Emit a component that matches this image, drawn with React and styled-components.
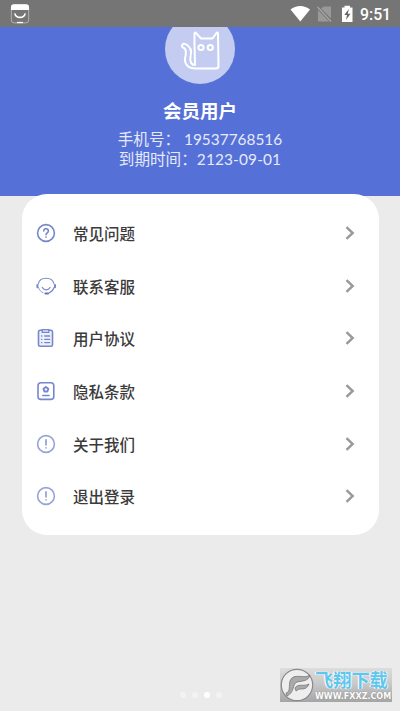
import React from 'react';
import styled, { createGlobalStyle } from 'styled-components';

const menuItems = [
    { label: '常见问题', icon: 'question' },
    { label: '联系客服', icon: 'service' },
    { label: '用户协议', icon: 'agreement' },
    { label: '隐私条款', icon: 'privacy' },
    { label: '关于我们', icon: 'about' },
    { label: '退出登录', icon: 'about' }
]

const StatusIcons = () => (
    <svg width='66' height='28' viewBox='0 0 66 28'>
        <path d='M0.5 9.5C6 4.7 14.5 4.7 20 9.5L10.3 21.5Z' fill='#fff' />
        <path d='M31 8.5L34 6.5H41V18.5ZM28 10L39 21.5H28Z' fill='#999' />
        <path d='M27.5 7L41 21.5' stroke='#a5a5a5' strokeWidth='1.3' />
        <path d='M52 7.5H54.5V5.8H60V7.5H62.5V22H52Z' fill='#fff' />
        <path d='M58.8 9L54.3 15H57L56 20L60.5 13.7H57.8Z' fill='#666' />
    </svg>
)

const AppIcon = () => (
    <svg width='20' height='20' viewBox='0 0 20 20'>
        <rect x='1.3' y='0.7' width='17.4' height='18.2' rx='3' fill='none' stroke='#ccc' strokeWidth='0.7' />
        <path d='M1 6V3Q1 0.3 4 0.3H16Q19 0.3 19 3V6Z' fill='#fff' />
        <path d='M4.8 9.3C6 14.7 14 14.7 15.2 9.3' fill='none' stroke='#fff' strokeWidth='1.6' />
        <path d='M7 18.5H13' stroke='#fff' strokeWidth='1.3' />
    </svg>
)

const CatIcon = () => (
    <svg width='70' height='70' viewBox='0 0 70 70' fill='none' stroke='#fff' strokeWidth='2' strokeLinejoin='round' strokeLinecap='round'>
        <path d='M29.5 31V19.5Q30 17.5 31.5 19.5L36 24.5H47.5L51.5 19Q53 17.5 53 20L53.5 52Q53.5 54.5 51 54.5H31C22 54.5 18.5 49 20.5 42C21.5 37 21 34.5 18 33.5C15.8 32 17.5 28.8 20.5 30.2C27 33 26.5 39 25.5 43C24.5 48 26.5 51 30 51L29.5 31' />
        <circle cx='36' cy='33.5' r='2.6' />
        <circle cx='45.3' cy='33.5' r='2.6' />
    </svg>
)

const MenuIcon = ({ name }) => (
    <svg width='20' height='20' viewBox='0 0 20 20' fill='none' stroke={name === 'about' ? '#96a5d7' : '#7688cb'} strokeWidth='1.6' strokeLinecap='round'>
        {name === 'question' && <>
            <circle cx='10' cy='10' r='8.4' />
            <path d='M7.7 8C7.7 4.8 12.4 5 12.4 8C12.4 9.8 10 9.8 10 11.7M10 14V14.2' />
        </>}
        {name === 'service' && <>
            <path d='M2.3 8C3.8 0.3 16.4 0.3 18 8' strokeWidth='1.1' />
            <path d='M18 11.5C17.3 14 15.5 16 13 17' strokeWidth='1.1' />
            <path d='M2.4 11.5C3.2 14 5 15.8 7 16.7' strokeWidth='0.8' />
            <path d='M1.4 9V11.2M19 9V11.2' strokeWidth='2' />
            <path d='M6.3 11.5C8.2 14.6 12.3 14.6 14 11.5' strokeWidth='1.2' />
            <path d='M9.5 17.5H12' stroke='#6476b7' strokeWidth='2.2' />
        </>}
        {name === 'agreement' && <>
            <rect x='2.5' y='2.3' width='14' height='16' rx='1.6' fill='#edf0fb' />
            <path d='M6.2 1.7H12.8V4.3H6.2Z' fill='#e0e5f8' strokeWidth='1.3' />
            <path d='M5.5 8H5.9M8.7 8H13.7M5.5 11.3H5.9M8.7 11.3H13.7M5.5 14.6H5.9M8.7 14.6H13.7' strokeWidth='1.3' />
        </>}
        {name === 'privacy' && <>
            <rect x='2' y='1.8' width='15.8' height='16.6' rx='3' />
            <path d='M9.9 6L12.3 7.8L11.4 10.5H8.4L7.5 7.8Z' strokeWidth='1.9' strokeLinejoin='round' />
            <path d='M6.8 14.5H13' />
        </>}
        {name === 'about' && <>
            <circle cx='10' cy='10' r='8.4' />
            <path d='M10 6V10.8' strokeWidth='1.8' />
            <path d='M10 13.8V14' />
        </>}
    </svg>
)

const Chevron = () => (
    <svg width='10' height='14' viewBox='0 0 10 14' fill='none' stroke='#999' strokeWidth='2.4'>
        <path d='M1.5 1.2L7.7 7L1.5 12.8' />
    </svg>
)

const WatermarkLogo = () => (
    <svg width='34' height='34' viewBox='0 0 34 34'>
        <circle cx='17' cy='17' r='15.7' fill='#eee' stroke='#898989' strokeWidth='1.2' />
        <path d='M6 25C12 24 7 14 12 10C17 6 25 11 30 7C29 13 22 13 17 14C12 16 15 24 7 28Z' fill='#aaa' stroke='#777' strokeWidth='0.8' />
        <path d='M15 20C18 15 24 19 29 16C27 21 24 21 20 21C18 21 18 22 16 23Z' fill='#aaa' stroke='#777' strokeWidth='0.8' />
    </svg>
)

const App = () => {
    return (
        <Page>
            <GlobalStyle />
            <StatusBar>
                <AppIcon />
                <StatusRight>
                    <StatusIcons />
                    <Clock>9:51</Clock>
                </StatusRight>
            </StatusBar>
            <Header>
                <Avatar><CatIcon /></Avatar>
                <Name>会员用户</Name>
                <Info>手机号：&nbsp;<Digits $spacing={0}>19537768516</Digits></Info>
                <Info>到期时间：<Digits $spacing={0.15}>2123-09-01</Digits></Info>
            </Header>
            <Card>
                {menuItems.map(item => (
                    <Row key={item.label}>
                        <MenuIcon name={item.icon} />
                        <Label>{item.label}</Label>
                        <Chevron />
                    </Row>
                ))}
            </Card>
            <Dots>
                <Dot />
                <Dot />
                <Dot $active />
                <Dot />
            </Dots>
            <Watermark>
                <WatermarkLogo />
                <WatermarkText>
                    <Brand>飞翔下载</Brand>
                    <Site>WWW.FXXZ.COM</Site>
                </WatermarkText>
            </Watermark>
        </Page>
    )
}

const GlobalStyle = createGlobalStyle`
    body {
        margin: 0;
    }
    * {
        box-sizing: border-box;
    }
    svg {
        display: block;
        flex-shrink: 0;
    }
`

const Page = styled.div`
    position: relative;
    display: flex;
    flex-direction: column;
    width: 400px;
    height: 711px;
    overflow: hidden;
    background: #ebebeb;
    font-family: Roboto, 'Noto Sans CJK SC', sans-serif;
`

const StatusBar = styled.div`
    display: flex;
    justify-content: space-between;
    align-items: center;
    height: 27px;
    padding: 0 9px 0 10px;
    background: #757575;
    flex-shrink: 0;
`

const StatusRight = styled.div`
    display: flex;
    align-items: center;
    gap: 4px;
`

const Clock = styled.div`
    width: 31px;
    padding-top: 2px;
    color: #fff;
    font-size: 15.8px;
    font-weight: 500;
    line-height: 28px;
    white-space: nowrap;
`

const Header = styled.div`
    display: flex;
    flex-direction: column;
    align-items: center;
    height: 169px;
    overflow: hidden;
    background: #5571d7;
    flex-shrink: 0;
`

const Avatar = styled.div`
    width: 70px;
    height: 70px;
    margin-top: -13px;
    border-radius: 50%;
    background: #c4cdf1;
    flex-shrink: 0;
`

const Name = styled.div`
    margin: 15px 0 5px;
    color: #fff;
    font-size: 18.5px;
    font-weight: 700;
    line-height: 26px;
`

const Info = styled.div`
    display: flex;
    align-items: center;
    color: #e6eafb;
    font-size: 15.6px;
    line-height: 20px;
    white-space: pre;
`

const Digits = styled.span`
    padding-bottom: 1px;
    font-family: Lato, sans-serif;
    font-size: 15.4px;
    line-height: 19px;
    letter-spacing: ${props => props.$spacing}px;
`

const Card = styled.div`
    position: relative;
    margin: -2px 21.5px 0;
    padding: 13px 24px 12px 14.5px;
    height: 341px;
    border-radius: 25px;
    background: #fff;
    flex-shrink: 0;
`

const Row = styled.div`
    display: flex;
    align-items: center;
    height: 52.6px;
`

const Label = styled.div`
    flex: 1;
    margin-left: 17px;
    padding-top: 4px;
    color: #3b3b3b;
    font-size: 15.5px;
    font-weight: 500;
    line-height: 24px;
`

const Dots = styled.div`
    display: flex;
    justify-content: center;
    align-items: center;
    gap: 6px;
    margin-top: auto;
    padding: 0 0 13px 2px;
`

const Dot = styled.div`
    width: 6px;
    height: 6px;
    border-radius: 50%;
    background: ${props => props.$active ? '#fff' : '#f3f3f3'};
`

const Watermark = styled.div`
    position: absolute;
    right: 8px;
    bottom: 9px;
    display: flex;
    width: 112px;
    height: 34px;
    background: linear-gradient(#ddd, #c9c9c9 45%, #a5a5a5);
`

const WatermarkText = styled.div`
    display: flex;
    flex-direction: column;
    align-items: flex-start;
    flex: 1;
    padding-left: 1px;
`

const Brand = styled.div`
    height: 24px;
    color: #5fc6ee;
    font-size: 18.2px;
    font-weight: 700;
    line-height: 26px;
    white-space: nowrap;
    text-shadow: 0 0 1px #fff, 1px 0 1px #fff, -1px 0 1px #fff;
`

const Site = styled.div`
    color: #fff;
    font-family: 'DejaVu Sans', sans-serif;
    font-size: 8px;
    font-weight: 700;
    line-height: 9px;
    white-space: nowrap;
    text-shadow: 0 0 1px #777;
`

export default App;
